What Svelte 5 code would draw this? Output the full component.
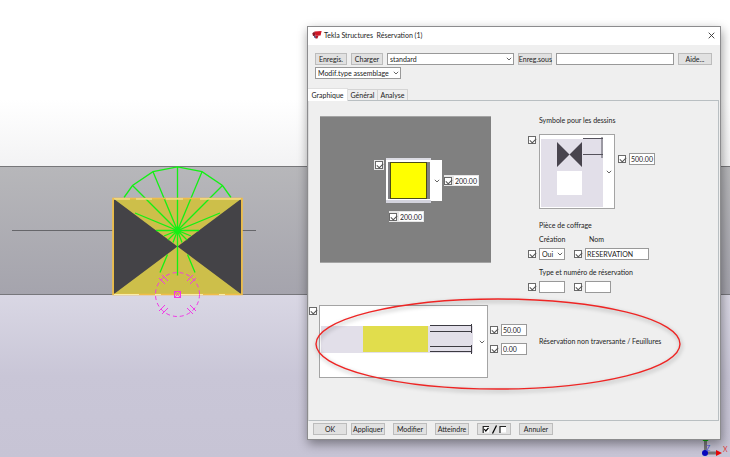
<script>
  let activeTab = $state('Graphique');
  const tabs = ['Graphique', 'Général', 'Analyse'];

  let preset = $state('standard');
  let saveAs = $state('');
  let width = $state('200.00');
  let height = $state('200.00');
  let symbolOffset = $state('500.00');
  let create = $state('Oui');
  let name = $state('RESERVATION');
  let prefix = $state('');
  let number = $state('');
  let depthTop = $state('50.00');
  let depthBottom = $state('0.00');
</script>

{#snippet chevron()}
  <svg class="chevron" viewBox="0 0 6 4" aria-hidden="true">
    <path d="M0.8 0.8 L3 3 L5.2 0.8" fill="none" stroke="#555" stroke-width="0.9" />
  </svg>
{/snippet}

{#snippet check(label)}
  <input class="check" type="checkbox" checked aria-label={label} />
{/snippet}

<div class="desktop">
  <div class="sky"></div>
  <div class="beam"></div>
  <div class="ground"></div>

  <svg class="model" viewBox="0 160 260 160" aria-hidden="true">
    <path d="M12 230.5 H256" stroke="#66666a" />
    <rect x="113" y="198" width="129" height="97" fill="#cdbf4a" />
    <path d="M114 199 L177.5 246.5 L114 294 Z M241 199 L177.5 246.5 L241 294 Z" fill="#444347" />
    <g fill="none" stroke="#14f014" stroke-width="1.3">
      <path d="M124 197.5 L132.5 185.5 L153 171.7 L177.5 166.8 L202 171.7 L222.5 185.5 L231 197.5" />
      <path d="M177.5 166.8 V275.5 M153 171.7 L177.5 230.5 L202 171.7 M132.5 185.5 L177.5 230.5 L222.5 185.5" />
      <path d="M135 213 L177.5 230.5 L220 213 M156 230.5 H199" />
      <path d="M164 236 L177.5 230.5 L191 236 M168 240 L177.5 230.5 L187 240 M173 242.5 L177.5 230.5 L182 242.5" />
      <path d="M167.5 254.5 L160 272.5 M187.5 254.5 L195 272.5" />
    </g>
    <circle cx="177.5" cy="230.5" r="3" fill="#14f014" />
    <rect x="113" y="198.5" width="129" height="96" fill="none" stroke="#f0bd49" stroke-width="1.6" />
    <path d="M114 199 H130 M136 199 H152 M166 199 H183 M200 199 H241 M114 294.5 H139 M155 294.5 H161 M181 294.5 H203 M219 294.5 H225" stroke="#f8eda8" />
    <g fill="none" stroke="#f03ae6">
      <circle cx="177.5" cy="294.5" r="22" stroke-dasharray="4 3" />
      <rect x="174.5" y="291.5" width="6" height="6" />
      <path d="M174.5 291.5 L180.5 297.5 M180.5 291.5 L174.5 297.5" stroke-width="0.8" />
      <path d="M159 278 l6 6 M162 275 l6 6" />
      <path d="M196 278 l-6 6 M193 275 l-6 6" />
      <path d="M159 311 l6 -6 M162 314 l6 -6" />
      <path d="M196 311 l-6 -6 M193 314 l-6 -6" />
    </g>
  </svg>

  <svg class="axes" viewBox="0 0 30 22" aria-hidden="true">
    <path d="M5.5 17 V4 M5 18 H17" fill="none" stroke="#777" stroke-width="3" />
    <path d="M2.5 6 L5.5 2 L8.5 6 Z" fill="#08b408" />
    <path d="M16 15 L22 18 L16 21 Z" fill="#e80808" />
    <circle cx="5" cy="18" r="3" fill="#0808c0" />
    <text x="6" y="16" fill="#5050e0">Z</text>
    <text x="23" y="17" fill="#e04040">X</text>
  </svg>

  <div class="dialog" role="dialog" aria-labelledby="dialog-title">
    <header class="title-bar">
      <svg class="logo" viewBox="0 0 10 8" aria-hidden="true">
        <path d="M2.6 0.5 L9.6 0 L8.6 4.4 L3.4 4.8 Z" fill="#d01828" />
        <path d="M0.3 2.2 L2.6 0.5 L3.4 4.8 L1 4.9 Z" fill="#8c1424" />
        <path d="M2 4.9 L3.6 4.8 L4 7.4 L2.4 6.8 Z" fill="#34407c" />
        <path d="M3.4 4.8 L6.6 4.6 L5.4 7.6 L3.9 7.4 Z" fill="#b81626" />
      </svg>
      <h1 id="dialog-title">Tekla Structures&nbsp; Réservation (1)</h1>
      <button class="close" type="button" aria-label="Fermer">
        <svg viewBox="0 0 7 7" aria-hidden="true">
          <path d="M0.7 0.7 L6.3 6.3 M6.3 0.7 L0.7 6.3" stroke="#333" stroke-width="0.9" />
        </svg>
      </button>
    </header>

    <div class="toolbar">
      <div class="toolbar-row">
        <button class="btn" type="button">Enregis.</button>
        <button class="btn" type="button">Charger</button>
        <span class="select preset">
          <select bind:value={preset} aria-label="Fichier de paramètres">
            <option>standard</option>
          </select>
          {@render chevron()}
        </span>
        <button class="btn wide" type="button">Enreg.sous</button>
        <input class="field save-as" type="text" bind:value={saveAs} aria-label="Enregistrer sous" />
        <button class="btn wide" type="button">Aide...</button>
      </div>
      <div class="toolbar-row">
        <span class="select assembly">
          <select aria-label="Type de modification">
            <option>Modif.type assemblage</option>
          </select>
          {@render chevron()}
        </span>
      </div>
    </div>

    <div class="tabs" role="tablist">
      {#each tabs as tab}
        <button
          type="button"
          role="tab"
          class:active={activeTab === tab}
          aria-selected={activeTab === tab}
          onclick={() => (activeTab = tab)}
        >{tab}</button>
      {/each}
    </div>

    <div class="panel" role="tabpanel">
      <div class="columns">
        <div class="canvas">
          <div class="canvas-row">
            <span class="chip corner">{@render check('Forme')}</span>
            <button class="picture shape" type="button" aria-label="Forme de la réservation">
              <svg viewBox="0 0 56 45" aria-hidden="true">
                <rect y="2" width="56" height="41" fill="#fff" />
                <rect width="45" height="2" fill="#dcdce4" />
                <rect y="42" width="45" height="3" fill="#d4d4de" />
                <rect x="2" y="4" width="42" height="37" fill="#808084" />
                <rect x="4.5" y="4.5" width="36" height="36" fill="#ff0" stroke="#4c4c18" />
              </svg>
              {@render chevron()}
            </button>
            <span class="chip">
              {@render check('Hauteur')}
              <input class="field small" type="text" bind:value={height} aria-label="Hauteur" />
            </span>
          </div>
          <span class="chip below">
            {@render check('Largeur')}
            <input class="field small" type="text" bind:value={width} aria-label="Largeur" />
          </span>
        </div>

        <div class="options">
          <h2>Symbole pour les dessins</h2>
          <div class="row symbol-row">
            {@render check('Symbole')}
            <button class="picture symbol" type="button" aria-label="Symbole pour les dessins">
              <svg viewBox="0 0 74 73" aria-hidden="true">
                <rect x="1" y="4" width="62" height="68" fill="#e2dfe9" />
                <path d="M17 7 L29.5 19.5 L17 32 Z M42 7 L29.5 19.5 L42 32 Z" fill="#48444e" />
                <rect x="17" y="36" width="25" height="24" fill="#fff" />
                <path d="M43 3.5 H63 M43 19.5 H63 M62 2 V23" stroke="#55525c" />
              </svg>
              {@render chevron()}
            </button>
            <span class="row offset">
              {@render check('Décalage du symbole')}
              <input class="field small" type="text" bind:value={symbolOffset} aria-label="Décalage du symbole" />
            </span>
          </div>

          <h2 class="section">Pièce de coffrage</h2>
          <div class="labels">
            <label for="create">Création</label>
            <label for="name">Nom</label>
          </div>
          <div class="row">
            {@render check('Création')}
            <span class="select small">
              <select id="create" bind:value={create}>
                <option>Oui</option>
                <option>Non</option>
              </select>
              {@render chevron()}
            </span>
            <span class="row second">
              {@render check('Nom')}
              <input class="field name" id="name" type="text" bind:value={name} />
            </span>
          </div>

          <h2 class="numbering">Type et numéro de réservation</h2>
          <div class="row">
            {@render check('Type')}
            <input class="field small" type="text" bind:value={prefix} aria-label="Type" />
            <span class="row second">
              {@render check('Numéro')}
              <input class="field small" type="text" bind:value={number} aria-label="Numéro" />
            </span>
          </div>
        </div>
      </div>

      <div class="rebate">
        {@render check('Feuillure')}
        <button class="picture section-view" type="button" aria-label="Type de feuillure">
          <svg viewBox="0 0 167 71" aria-hidden="true">
            <rect x="1" y="20" width="152" height="27" fill="#e2dfe9" />
            <rect x="43" y="20" width="65" height="26" fill="#e1dd4c" />
            <path d="M110 19.5 H152 M110 25.5 H152 M110 40.5 H152 M110 45.5 H152 M151.5 18 V27 M151.5 39 V48" stroke="#3c3a42" />
          </svg>
          {@render chevron()}
        </button>
        <div class="depths">
          <span class="row">
            {@render check('Profondeur supérieure')}
            <input class="field small" type="text" bind:value={depthTop} aria-label="Profondeur supérieure" />
          </span>
          <span class="row">
            {@render check('Profondeur inférieure')}
            <input class="field small" type="text" bind:value={depthBottom} aria-label="Profondeur inférieure" />
          </span>
        </div>
        <p>Réservation non traversante / Feuillures</p>
        <svg class="highlight" viewBox="0 0 368 94" aria-hidden="true">
          <ellipse cx="184" cy="47" rx="182" ry="45" fill="none" stroke="#ee2524" stroke-width="1.4" />
        </svg>
      </div>
    </div>

    <footer>
      <div class="confirm">
        <button class="btn wide" type="button">OK</button>
        <button class="btn wide" type="button">Appliquer</button>
      </div>
      <button class="btn wide" type="button">Modifier</button>
      <button class="btn wide" type="button">Atteindre</button>
      <button class="btn wide" type="button" aria-label="Tout cocher ou décocher">
        <svg class="toggle" viewBox="0 0 25 9" aria-hidden="true">
          <rect x="1" y="1.5" width="6" height="6" fill="#fff" />
          <path d="M1.2 8 V1.5 H7" fill="none" stroke="#222" stroke-width="1.2" />
          <path d="M2.3 4 L3.8 6 L6.5 2.8" fill="none" stroke="#000" stroke-width="1.2" />
          <path d="M10.5 8.5 L14.5 0.5" stroke="#000" stroke-width="1.3" />
          <rect x="18" y="1.5" width="6" height="6" fill="#fff" />
          <path d="M18 8 V1.5 H24" fill="none" stroke="#222" stroke-width="1.2" />
        </svg>
      </button>
      <button class="btn wide" type="button">Annuler</button>
    </footer>
  </div>
</div>

<style>
  :global(body) {
    margin: 0;
  }

  .desktop {
    position: relative;
    display: flex;
    flex-direction: column;
    min-height: 100vh;
    overflow: hidden;
    font-family: Lato, 'Open Sans', sans-serif;
    font-size: 7px;
    line-height: 9px;
    color: #222;
  }

  .desktop * {
    box-sizing: border-box;
  }

  .sky {
    height: 166px;
    background: linear-gradient(#fff 60%, #f3f3f4);
  }

  .beam {
    height: 129px;
    border-top: 1px solid #77777a;
    border-bottom: 1px solid #77777c;
    background: linear-gradient(#b7b7ba, #a5a4ad);
  }

  .ground {
    flex: 1;
    background: linear-gradient(#d9d7e4, #c9c6d7 50%, #c7c4d5);
  }

  .model {
    position: absolute;
    top: 160px;
    left: 0;
    width: 260px;
    height: 160px;
  }

  .axes {
    position: absolute;
    right: 0;
    bottom: 0;
    width: 30px;
    height: 22px;
    font-size: 7px;
  }

  .dialog {
    position: absolute;
    top: 26px;
    left: 307px;
    right: 9px;
    border: 1px solid #8c8c8e;
    background: #efefef;
    box-shadow: 1px 4px 10px rgba(0, 0, 0, 0.4);
  }

  button,
  input,
  select {
    margin: 0;
    padding: 0;
    border-radius: 0;
    font: inherit;
    color: inherit;
  }

  h1,
  h2,
  p {
    margin: 0;
    font-size: inherit;
    font-weight: normal;
  }

  .title-bar {
    display: flex;
    align-items: center;
    gap: 2px;
    height: 18px;
    padding: 0 5px 2px 4px;
    background: #fff;
  }

  .logo {
    width: 10px;
    height: 8px;
  }

  .close {
    display: flex;
    margin-left: auto;
    border: none;
    background: none;
  }

  .close svg {
    width: 7px;
    height: 7px;
  }

  .toolbar {
    display: flex;
    flex-direction: column;
    gap: 2px;
    padding: 8px 8px 9px 7px;
  }

  .toolbar-row {
    display: flex;
    gap: 4px;
  }

  .btn {
    display: flex;
    flex: none;
    align-items: center;
    justify-content: center;
    width: 32px;
    height: 12px;
    border: 1px solid #bcbcbc;
    background: #e1e1e1;
    white-space: nowrap;
  }

  .btn.wide {
    width: 34px;
  }

  .field {
    height: 12px;
    padding: 0 0 0 1px;
    border: 1px solid #999;
    background: #fff;
    outline: none;
  }

  .save-as {
    flex: 116 1 0;
    width: 0;
    min-width: 0;
  }

  .select {
    position: relative;
    display: block;
    height: 12px;
  }

  .select select {
    display: block;
    width: 100%;
    height: 100%;
    padding: 0 2px;
    border: 1px solid #999;
    background: #fff;
    appearance: none;
    outline: none;
  }

  .preset {
    flex: 129 1 0;
  }

  .assembly {
    width: 86px;
  }

  .chevron {
    position: absolute;
    top: calc(50% - 2px);
    right: 2px;
    width: 6px;
    height: 4px;
    pointer-events: none;
  }

  .tabs {
    display: flex;
    align-items: flex-end;
    height: 12px;
  }

  .tabs button {
    width: 30px;
    height: 11px;
    border: 1px solid #d4d4d4;
    border-left: none;
    border-bottom: none;
    background: #efefef;
  }

  .tabs button.active {
    z-index: 1;
    width: 40px;
    height: 13px;
    margin-bottom: -1px;
    border-color: #e0e0e0;
    background: #fff;
  }

  .panel {
    margin-right: 1px;
    padding-bottom: 42px;
    border: 1px solid #b9bfc2;
    border-left-color: #dcdcdc;
  }

  .columns {
    display: grid;
    grid-template-columns: 171px 1fr;
    gap: 37px;
    padding: 15px 8px 12px 11px;
  }

  .canvas {
    align-self: start;
    height: 147px;
    padding: 41px 0 0 54px;
    border-top: 1px solid #a4a4a4;
    border-bottom: 1px solid #a4a4a4;
    background: #808080;
  }

  .canvas-row {
    display: flex;
    align-items: center;
    gap: 2px;
  }

  .chip {
    display: flex;
    align-items: center;
    gap: 1px;
    width: fit-content;
    background: #e6e6e6;
  }

  .chip.corner {
    align-self: flex-start;
    margin-top: 2px;
    padding: 1px;
  }

  .chip.below {
    margin: 8px 0 0 15px;
  }

  .chip .field {
    height: 11px;
    border-color: #e6e6e6;
  }

  .picture {
    position: relative;
    display: block;
    flex: none;
    border: none;
    background: none;
  }

  .picture svg:first-child {
    display: block;
    width: 100%;
    height: 100%;
  }

  .shape {
    width: 56px;
    height: 45px;
  }

  .symbol {
    width: 76px;
    height: 75px;
    border: 1px solid #a4a4a4;
    background: #fff;
  }

  .section-view {
    width: 169px;
    height: 73px;
    border: 1px solid #a4a4a4;
    background: #fff;
  }

  .check {
    position: relative;
    flex: none;
    width: 8px;
    height: 8px;
    border: 1px solid #6a6a6a;
    background: #fff;
    appearance: none;
  }

  .check:checked::after {
    content: '';
    position: absolute;
    top: 1px;
    left: 1px;
    width: 5px;
    height: 3px;
    border: solid #555;
    border-width: 0 0 1px 1px;
    transform: rotate(-45deg);
  }

  .row {
    display: flex;
    align-items: center;
    gap: 3px;
  }

  .small {
    width: 26px;
  }

  .name {
    width: 64px;
  }

  .second {
    margin-left: 6px;
  }

  .options h2,
  .labels {
    padding-left: 11px;
  }

  .symbol-row {
    align-items: flex-start;
    margin-top: 9px;
  }

  .symbol-row > .check {
    margin-top: 2px;
  }

  .offset {
    margin-top: 19px;
  }

  .options .section {
    margin-top: 12px;
  }

  .labels {
    display: grid;
    grid-template-columns: 50px 1fr;
    margin: 5px 0 4px;
  }

  .options .numbering {
    margin: 8px 0 4px;
  }

  .rebate {
    position: relative;
    display: flex;
    align-items: center;
    gap: 2px;
  }

  .rebate > .check {
    align-self: flex-start;
    margin-top: 2px;
  }

  .depths {
    display: flex;
    flex-direction: column;
    gap: 7px;
    padding-bottom: 4px;
  }

  .rebate p {
    margin-left: 10px;
  }

  .highlight {
    position: absolute;
    top: -8px;
    left: 5px;
    width: 368px;
    height: 94px;
    filter: drop-shadow(1px 2px 2px rgba(0, 0, 0, 0.35));
    pointer-events: none;
  }

  footer {
    display: flex;
    gap: 8px;
    padding: 2px 5px 4px;
  }

  .confirm {
    display: flex;
    gap: 4px;
  }

  .toggle {
    width: 25px;
    height: 9px;
  }
</style>
